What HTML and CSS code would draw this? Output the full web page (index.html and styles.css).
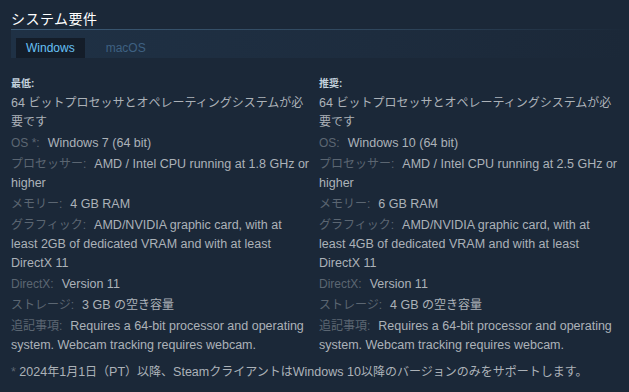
FILE: index.html
```html
<!DOCTYPE html>
<html lang="ja">
<head>
  <meta charset="UTF-8">
  <title>システム要件</title>
  <link rel="stylesheet" href="styles.css">
</head>
<body>
  <div class="sysreq">
    <h2 class="title">システム要件</h2>

    <div class="tabs">
      <div class="tab active">Windows</div>
      <div class="tab">macOS</div>
    </div>

    <div class="cols">
      <div class="col">
        <div class="head">最低:</div>
        <ul>
          <li>64 <span class="ja">ビットプロセッサとオペレーティングシステムが必要です</span></li>
          <li><span class="label">OS *:</span>Windows 7 (64 bit)</li>
          <li><span class="label">プロセッサー:</span>AMD / Intel CPU running at 1.8 GHz or higher</li>
          <li><span class="label">メモリー:</span>4 GB RAM</li>
          <li><span class="label">グラフィック:</span>AMD/NVIDIA graphic card, with at least 2GB of dedicated VRAM and with at least DirectX 11</li>
          <li><span class="label">DirectX:</span>Version 11</li>
          <li><span class="label">ストレージ:</span>3 GB <span class="ja">の空き容量</span></li>
          <li><span class="label">追記事項:</span>Requires a 64-bit processor and operating system. Webcam tracking requires webcam.</li>
        </ul>
      </div>

      <div class="col">
        <div class="head">推奨:</div>
        <ul>
          <li>64 <span class="ja">ビットプロセッサとオペレーティングシステムが必要です</span></li>
          <li><span class="label">OS:</span>Windows 10 (64 bit)</li>
          <li><span class="label">プロセッサー:</span>AMD / Intel CPU running at 2.5 GHz or higher</li>
          <li><span class="label">メモリー:</span>6 GB RAM</li>
          <li><span class="label">グラフィック:</span>AMD/NVIDIA graphic card, with at least 4GB of dedicated VRAM and with at least DirectX 11</li>
          <li><span class="label">DirectX:</span>Version 11</li>
          <li><span class="label">ストレージ:</span>4 GB <span class="ja">の空き容量</span></li>
          <li><span class="label">追記事項:</span>Requires a 64-bit processor and operating system. Webcam tracking requires webcam.</li>
        </ul>
      </div>
    </div>

    <div class="note"><span class="star">*</span> 2024<span class="ja">年</span>1<span class="ja">月</span>1<span class="ja">日（</span>PT<span class="ja">）以降、</span>Steam<span class="ja">クライアントは</span>Windows 10<span class="ja">以降のバージョンのみをサポートします。</span></div>
  </div>
</body>
</html>
```

FILE: styles.css
```css
body {
  margin: 0;
  background-color: #1b2838;
  color: #acb2b8;
  font-family: "Liberation Sans", "Noto Sans CJK JP", sans-serif;
  font-size: 12.5px;
}
.sysreq {
  padding: 0 0 0 11px;
}
.title {
  margin: 0;
  padding-top: 8px;
  height: 21px;
  font-size: 14px;
  font-weight: normal;
  letter-spacing: 0.5px;
  color: #ffffff;
}
.tabs {
  display: flex;
  align-items: flex-end;
  height: 28px;
  border-top: 1px solid transparent;
  border-image: linear-gradient(to right, #3c5a75 0%, #2f465c 60%, rgba(27, 40, 56, 0) 100%) 1;
  background: linear-gradient(to right, #1f3145 0%, #1d2c3e 60%, #1b2838 100%);
}
.tab {
  height: 20px;
  line-height: 20px;
  padding: 0 10px;
  margin-left: 5px;
  font-size: 12px;
  color: #3e6182;
}
.tab.active {
  background-color: #141d29;
  color: #67c1f5;
}
.tab + .tab {
  margin-left: 11px;
}
.cols {
  display: flex;
  gap: 9px;
  padding-top: 19px;
}
.col {
  width: 299px;
}
.head {
  font-size: 10px;
  font-weight: bold;
  line-height: 14px;
  color: #c6d4df;
  margin-bottom: 3px;
}
ul {
  list-style: none;
  margin: 0;
  padding: 0;
}
li {
  line-height: 19px;
  margin-bottom: 2px;
}
.ja {
  font-size: 12px;
  line-height: 14px;
}
.label {
  font-size: 12px;
  line-height: 14px;
  color: #5b6672;
  margin-right: 8px;
}
.note {
  margin-top: 6px;
  line-height: 19px;
}
.star {
  color: #5b6672;
}
```
